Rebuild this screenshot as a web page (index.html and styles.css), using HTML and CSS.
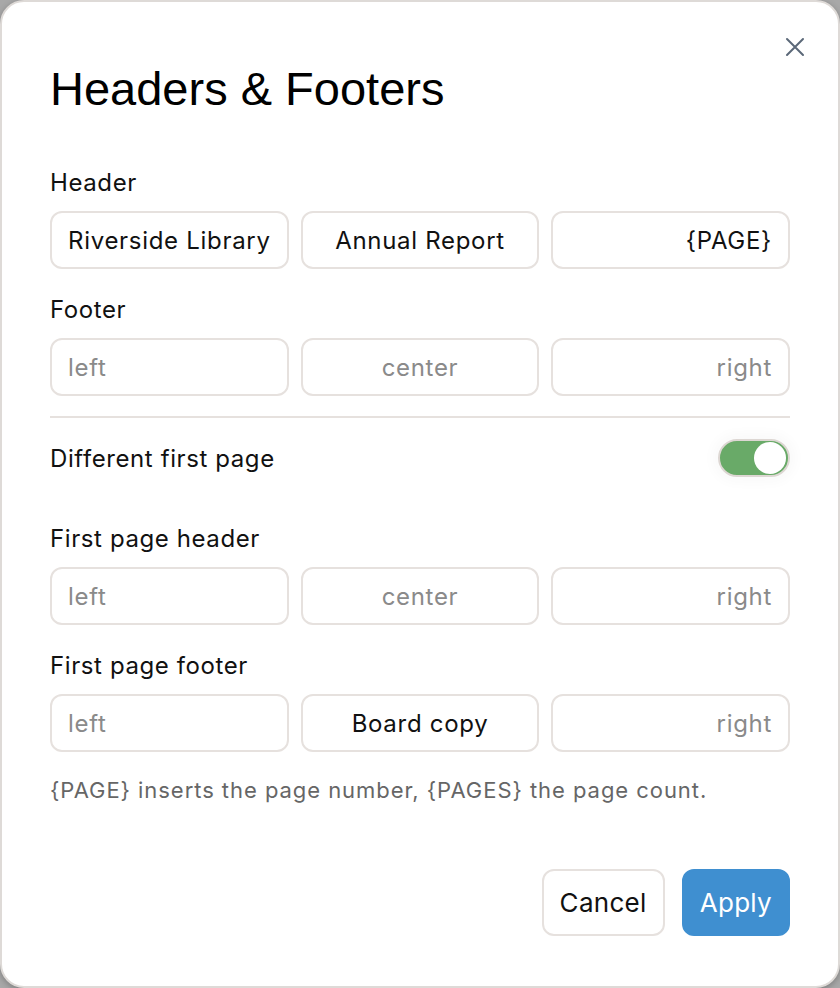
FILE: index.html
```html
<!DOCTYPE html>
<html lang="en">
<head>
    <meta charset="UTF-8">
    <meta name="viewport" content="width=device-width, initial-scale=1.0">
    <title>Headers &amp; Footers</title>
    <link rel="stylesheet" href="styles.css">
</head>
<body>
<div class="dialog">
    <button class="close-btn" aria-label="Close">
        <svg width="22" height="22" viewBox="0 0 22 22">
            <path d="M3 3 L19 19 M19 3 L3 19" stroke="#5b6878" stroke-width="2" stroke-linecap="round" fill="none"/>
        </svg>
    </button>

    <h1>Headers &amp; Footers</h1>

    <!-- Header fields -->
    <div class="field-label">Header</div>
    <div class="field-row">
        <input type="text" class="field left" value="Riverside Library" placeholder="left">
        <input type="text" class="field center" value="Annual Report" placeholder="center">
        <input type="text" class="field right" value="{PAGE}" placeholder="right">
    </div>

    <!-- Footer fields -->
    <div class="field-label">Footer</div>
    <div class="field-row">
        <input type="text" class="field left" placeholder="left">
        <input type="text" class="field center" placeholder="center">
        <input type="text" class="field right" placeholder="right">
    </div>

    <hr class="divider">

    <div class="toggle-row">
        <span>Different first page</span>
        <label class="switch">
            <input type="checkbox" checked>
            <span class="slider"></span>
        </label>
    </div>

    <div class="field-label first">First page header</div>
    <div class="field-row">
        <input type="text" class="field left" placeholder="left">
        <input type="text" class="field center" placeholder="center">
        <input type="text" class="field right" placeholder="right">
    </div>

    <div class="field-label">First page footer</div>
    <div class="field-row">
        <input type="text" class="field left" placeholder="left">
        <input type="text" class="field center" value="Board copy" placeholder="center">
        <input type="text" class="field right" placeholder="right">
    </div>

    <p class="hint">{PAGE} inserts the page number, {PAGES} the page count.</p>

    <div class="actions">
        <button class="btn btn-cancel">Cancel</button>
        <button class="btn btn-apply">Apply</button>
    </div>
</div>
</body>
</html>
```

FILE: styles.css
```css
body {
    margin: 0;
    background: #a8a8a8;
    font-family: 'Inter', 'Noto Sans', sans-serif;
    color: #111;
}

.dialog {
    position: relative;
    box-sizing: border-box;
    width: 840px;
    height: 988px;
    background: #fff;
    border: 2px solid #dedad7;
    border-radius: 24px;
    padding: 60px 48px 0 48px;
    box-shadow: 0 2px 6px rgba(0, 0, 0, 0.25);
}

.close-btn {
    position: absolute;
    top: 34px;
    right: 32px;
    border: none;
    background: none;
    padding: 0;
    line-height: 0;
    cursor: pointer;
}

h1 {
    margin: 0 0 52px 0;
    font-family: 'Liberation Sans', 'Noto Sans', sans-serif;
    font-size: 47px;
    font-weight: 400;
    line-height: 54px;
    color: #000;
}

.field-label {
    font-size: 24px;
    line-height: 29px;
    letter-spacing: 0.6px;
    margin-bottom: 14px;
}

.field-label.first {
    margin-top: 47px;
}

.field-row {
    display: grid;
    grid-template-columns: 1fr 1fr 1fr;
    gap: 12px;
    margin-bottom: 26px;
}

.field {
    box-sizing: border-box;
    height: 58px;
    width: 100%;
    border: 2px solid #e6e1de;
    border-radius: 12px;
    padding: 0 16px;
    font-family: inherit;
    font-size: 24px;
    letter-spacing: 0.7px;
    color: #111;
    outline: none;
}

.field::placeholder {
    color: #8a8a8a;
}

.field.center { text-align: center; }
.field.right { text-align: right; }

.divider {
    border: none;
    border-top: 2px solid #e6e1de;
    margin: -6px 0 21px 0;
}

.toggle-row {
    display: flex;
    justify-content: space-between;
    align-items: center;
    font-size: 24px;
    letter-spacing: 0.6px;
}

.switch {
    position: relative;
    display: inline-block;
    width: 72px;
    height: 38px;
    border-radius: 19px;
    box-shadow: 0 0 12px 6px rgba(0, 0, 0, 0.025);
}

.switch input {
    display: none;
}

.slider {
    position: absolute;
    inset: 0;
    background: #69aa68;
    border: 2px solid #ddd7d3;
    border-radius: 19px;
}

.slider::after {
    content: '';
    position: absolute;
    top: 1px;
    right: 2px;
    width: 32px;
    height: 32px;
    border-radius: 50%;
    background: #fff;
}

.hint {
    margin: 1px 0 0 0;
    font-size: 22px;
    line-height: 24px;
    letter-spacing: 0.95px;
    color: #666;
}

.actions {
    display: flex;
    justify-content: flex-end;
    gap: 17px;
    margin-top: 67px;
}

.btn {
    height: 67px;
    border-radius: 12px;
    font-family: inherit;
    font-size: 26px;
    letter-spacing: 0.3px;
    padding: 0 16px;
    cursor: pointer;
}

.btn-cancel {
    background: #fff;
    border: 2px solid #e6e1de;
    color: #111;
}

.btn-apply {
    background: #3f8fd0;
    border: 2px solid #3f8fd0;
    color: #fff;
}
```
